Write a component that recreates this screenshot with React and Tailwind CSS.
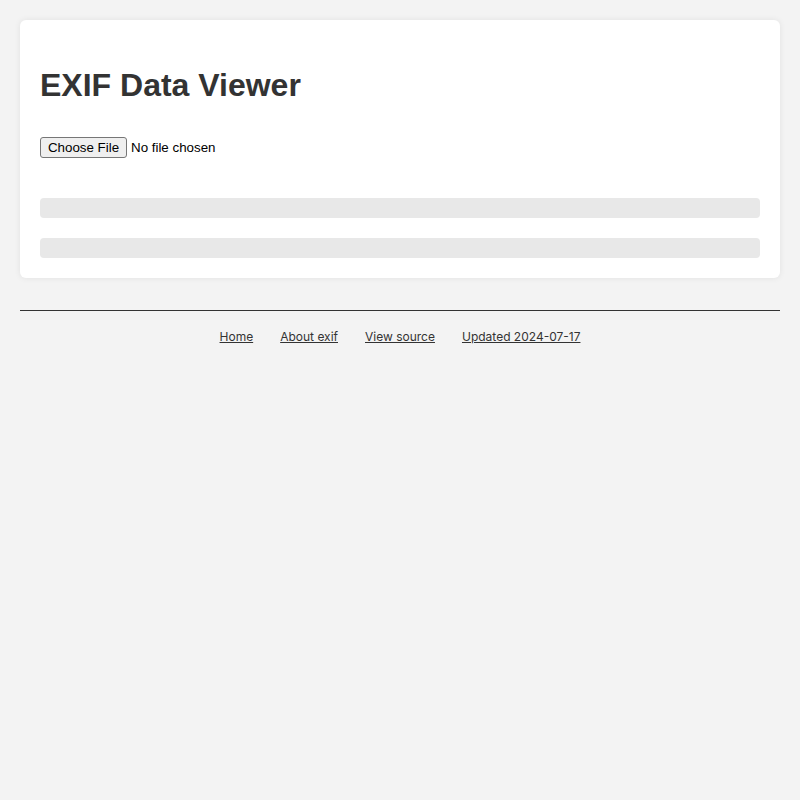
import { useState } from 'react';

const footerLinks = [
  { href: '#', label: 'Home' },
  { href: '#', label: 'About exif' },
  { href: '#', label: 'View source' },
  { href: '#', label: 'Updated 2024-07-17' },
];

export default function App() {
  const [fileName, setFileName] = useState('');

  return (
    <div className="min-h-screen bg-[#f3f3f3] px-5 pt-5 text-[#333] font-['Liberation_Sans',Arial,sans-serif]">
      {/* Main card */}
      <div className="bg-white rounded-md shadow-[0_0_6px_rgba(0,0,0,0.08)] p-5">
        <h1 className="mt-[27px] text-[32px] leading-[37px] font-bold">EXIF Data Viewer</h1>

        <label className="mt-[33px] flex items-center h-[21px] text-[13.33px] text-black cursor-pointer">
          <input
            type="file"
            className="hidden"
            onChange={(e) => setFileName(e.target.files?.[0]?.name ?? '')}
          />
          <span className="h-[21px] w-[87px] flex items-center justify-center border border-[#767676] rounded-[3px] bg-[#efefef]">
            Choose File
          </span>
          <span className="ml-[4px]">{fileName || 'No file chosen'}</span>
        </label>

        {/* Placeholder rows for EXIF output */}
        <div className="mt-10 flex flex-col gap-5">
          <div className="h-5 rounded bg-[#e8e8e8]" />
          <div className="h-5 rounded bg-[#e8e8e8]" />
        </div>
      </div>

      {/* Footer */}
      <footer className="mt-8 border-t border-[#333]">
        <nav className="flex justify-center gap-[27px] pt-[18px] text-xs font-['Inter',sans-serif]">
          {footerLinks.map(({ href, label }) => (
            <a key={label} href={href} className="underline text-[#333]">
              {label}
            </a>
          ))}
        </nav>
      </footer>
    </div>
  );
}
